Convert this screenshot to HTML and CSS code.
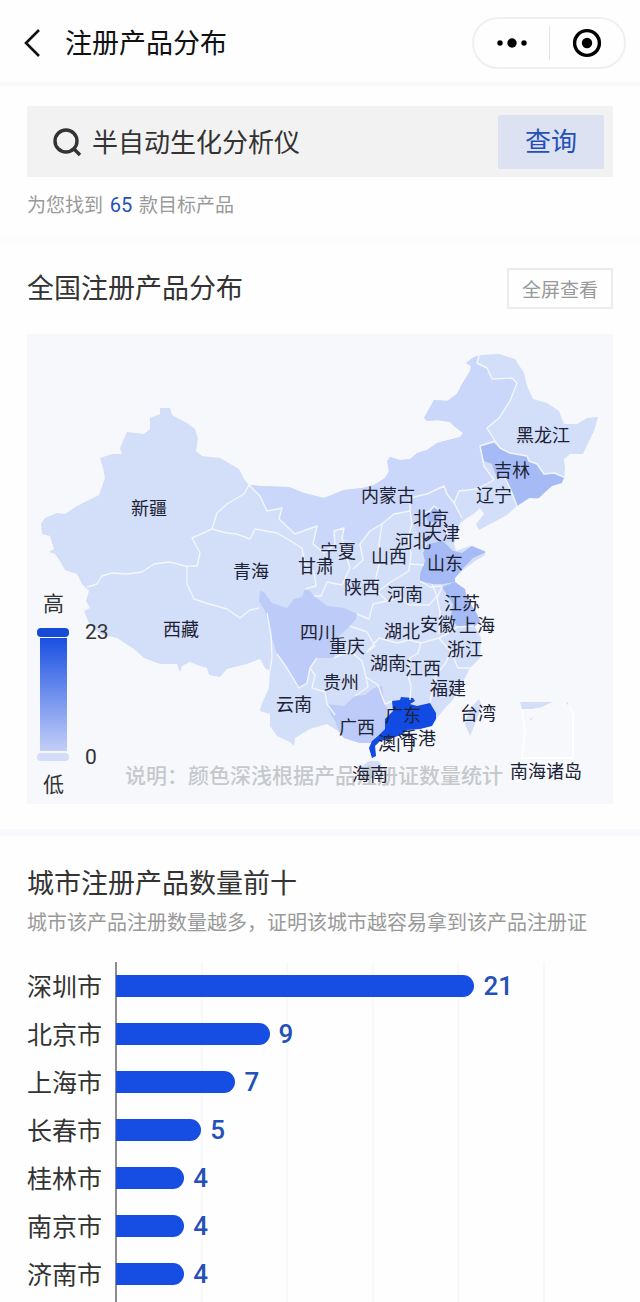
FILE: index.html
```
<!DOCTYPE html>
<html lang="zh-CN">
<head>
    <meta charset="UTF-8">
    <meta name="viewport" content="width=device-width, initial-scale=1.0">
    <title>注册产品分布</title>
    <link rel="stylesheet" href="styles.css">
</head>
<body>
    <header class="navbar">
        <button class="back-btn" type="button" aria-label="返回">
            <svg width="18" height="28" viewBox="0 0 18 28"><path d="M16 1 3 14l13 13" fill="none" stroke="#111" stroke-width="2.6"/></svg>
        </button>
        <h1>注册产品分布</h1>
        <div class="capsule">
            <button type="button" aria-label="更多">
                <svg width="32" height="12" viewBox="0 0 32 12"><circle cx="4" cy="6" r="2.7"/><circle cx="16" cy="6" r="4.7"/><circle cx="28" cy="6" r="2.7"/></svg>
            </button>
            <button type="button" aria-label="关闭">
                <svg width="30" height="30" viewBox="0 0 30 30"><circle cx="15" cy="15" r="12.4" fill="none" stroke="#000" stroke-width="3.4"/><circle cx="15" cy="15" r="5.2"/></svg>
            </button>
        </div>
    </header>

    <main>
        <!-- Search -->
        <section class="search-section">
            <form class="search-box">
                <label for="keyword" aria-label="搜索产品">
                    <svg width="30" height="30" viewBox="0 0 30 30"><g fill="none" stroke="#333" stroke-width="3.4"><circle cx="14" cy="14" r="11"/><path d="m21 21 7 7"/></g></svg>
                </label>
                <input id="keyword" type="text" value="半自动生化分析仪">
                <button class="query-btn" type="button">查询</button>
            </form>
            <p class="found">为您找到 <b>65</b> 款目标产品</p>
        </section>

        <!-- Map -->
        <section class="map-section">
            <div class="section-head">
                <h2>全国注册产品分布</h2>
                <button class="full-btn" type="button">全屏查看</button>
            </div>
            <svg class="map" viewBox="27 333 586 470" role="img" aria-label="全国注册产品分布地图">
                <defs>
                    <linearGradient id="scale" x1="0" y1="0" x2="0" y2="1">
                        <stop offset="0" stop-color="#1a50e2"/>
                        <stop offset="1" stop-color="#c3cff8"/>
                    </linearGradient>
                </defs>

                <!-- whole country -->
                <path class="land" d="M160 407H170L172 414 179 418 187 422 195 428 198 438 196 450 202 455 220 457 227 461 239 468 244 478 249 484 260 485 289 486 304 492 324 497 334 493 344 489 362 487 374 484 385 477 389 470 387 460 390 456 400 459 410 458 417 452 427 449 437 442 460 436 463 432 454 425 450 421 437 419 427 420 424 417 434 399 447 400 457 393 462 383 470 370 471 365 466 362 474 356 482 354 499 353 515 358 524 372 527 385 533 398 547 402 559 410 564 423H577L587 417 598 416 594 430 590 438 583 453H570L564 458 565 467 564 479 552 485 537 498 530 497 517 505 507 514 494 521 479 529 476 523 484 513 480 507 475 512 467 517 459 523 459 527 454 543 456 550 470 545 485 550 485 554 475 560 463 569 455 577 455 581 465 590 467 597 477 613 480 620 474 625 479 633 481 637 480 657 470 667 465 677 460 687 452 700 445 707 437 717 430 725 420 728 407 729 403 733 390 738 380 740 375 745 376 755 372 757 369 747 372 742 360 742 344 737 338 730 327 723 310 728 295 737 294 745 290 741 277 735 270 725V713L260 710 262 702 269 687 270 670 265 667 260 658 247 663 227 668 220 676 209 674 207 667 200 665 190 661 182 665 180 671 177 663 160 663 144 657 134 648 117 637 100 633 89 622 84 610 90 607 86 600 89 590 82 583 77 573 65 569 60 560 55 553 49 551 54 548 50 535 42 533 41 523 45 517 57 512 65 513 77 505 99 494 105 477 103 467 100 457 112 453H122L120 447 127 431 144 433 150 428V417L160 413z"/>
                <path class="land" d="M479 698L481 703 479 713 470 735 465 723 470 707zM361 766l8-6h9l4 4-4 8-8 5-8-3z"/>

                <!-- 内蒙古 -->
                <path class="mid" d="M249 484L260 485 289 486 304 492 324 497 334 493 344 489 362 487 374 484 385 477 389 470 387 460 390 456 400 459 410 458 417 452 427 449 437 442 460 436 463 432 454 425 450 421 437 419 427 420 424 417 434 399 447 400 457 393 462 383 470 370 471 365 466 362 474 356 479 355 477 362 487 367 492 378 512 377 517 382 510 400 499 417 487 427 495 440 480 445 484 465 494 479 477 488 459 490 454 502 447 493 444 485 427 493 410 497V510L394 513 382 523 370 530 360 543 342 537 344 527 334 530 335 543 324 552 313 543 317 525 295 533 279 518 282 507 267 510 260 495z"/>
                <path class="mid" d="M410 497L427 493 444 485 447 493 454 502 462 517 457 530 454 542 443 540 428 543 420 535 412 523z"/>

                <!-- 四川 / 广西 -->
                <path class="warm" d="M260 590l4 1 8 11 15 5 7-9 8-2 3-8 5 2 4 5 13 10 17 2 13 6-1 5-6 7-13 12-5 5 5 6-3 9-17 0-7 10-3 15-8 5-12-20-10-14-5-16-7-27-6-10zM327 703l17 2 11-10 10-1 9-7 8-2 2 15 3 8-1 18-3 11-11 5-12 0-16-5-5-7-4-10-5-8z"/>

                <!-- 吉林 / 山东 / 江苏 / 北京 -->
                <path class="hot" d="M480 445L494 442 500 447 510 452 527 455 529 460 537 463 544 473 554 472 564 475 562 482 552 485 545 491 539 497 529 497 517 505 510 487 505 477 497 477 492 463 484 460zM428 543L443 540 453 550 462 552 472 545 486 551 473 557 463 567 455 577V581L443 583H433L420 580V573L425 560 423 552zM442 586L455 581 465 588 467 597 477 613 480 620 474 626 457 625 451 615 453 603 447 594zM425 512l5-2 4-5 5 4 4 3-1 6-6 4-8-2z"/>

                <!-- 广东 -->
                <path class="top" d="M392 700L400 699 401 696 413 697 415 700 410 703 417 705 430 702 433 707 436 712V718L432 725 420 728 407 729 403 733 390 738 380 740 375 745 376 755 372 757 369 747 372 740 378 735 385 728V718L393 710z"/>

                <!-- province borders -->
                <g class="border">
                    <path d="M87 586L97 583 102 575 112 572 127 573 142 571 154 563 170 561 185 565 197 565 200 552 192 537 212 528 217 512 227 503 244 493 249 484 260 495 267 510 282 507 279 518 295 533 317 525 313 543 324 552"/>
                    <path d="M212 528L227 532 237 533 250 538 255 528 277 532 289 539 302 547 305 563 314 571 316 585 305 588M187 565V583L194 598 209 603 227 608 240 617 250 609 259 607M267 612l4 22 1 22-2 14M277 653l10 14 12 20 8-5 3-15 7-10"/>
                    <path d="M324 552L335 543 334 530 344 527 342 537 345 551M360 543L370 530 382 523 394 513 410 510V497L427 493 444 485 447 493 454 502 459 490 477 488 494 479M454 502l8 15"/>
                    <path d="M479 355L477 362 487 367 492 378 512 377 517 382 510 400 499 417 487 427 495 440 480 445 484 465 494 479M495 440l5 7 10 5 17 3 2 5 8 3 7 10 10-1 10 4M505 477l5 10 7 18"/>
                    <path d="M345 551l5 16-8 17-15-3-6 14-7 0M360 543l3 16-10 9M382 523l-3 20 1 17-4 16 1 14 10 10M410 510l2 13-4 14 3 16-2 17-20 12-10 8M409 563l15 1M420 580l10 6 12-1M387 600l14-4 8 8 20 0 8-9-5-12M357 613l12 5 4-15 14-3M350 625l17 6 8 14-8 6M367 651l12-14 18 5 12-3 12 3-3 10-8 5-2 17 3 11-1 14M334 657l16-7 12 10 4 16 2 10-13 9M366 676l12 8 7 19 7-3M421 642l18-5 10-5 8-6M442 586l-5 11 3 14-1 22M439 637l12 14-6 12-9 11-6 27M451 651l7 16 12 0M457 626l17-1M327 703l-2-12-13-4 3-13-5-7M335 714l-8-11M425 512l5-2 4-5 9 7-1 6M444 520l3 12-3 8"/>
                </g>

                <!-- South China Sea inset -->
                <path class="land" d="M520 701h32l-10 5-10 2h-10zM566 702l2-1v3zM530 718l3-2-2 4z"/>
                <path class="inset" d="M522 708l3 24-3 25h51v-45l-4-7"/>

                <text class="note" x="125" y="782">说明：颜色深浅根据产品注册证数量统计</text>

                <g class="names">
                    <text x="149" y="514">新疆</text>
                    <text x="181" y="635">西藏</text>
                    <text x="251" y="577">青海</text>
                    <text x="316" y="572">甘肃</text>
                    <text x="338" y="557">宁夏</text>
                    <text x="388" y="501">内蒙古</text>
                    <text x="543" y="441">黑龙江</text>
                    <text x="512" y="476">吉林</text>
                    <text x="494" y="501">辽宁</text>
                    <text x="431" y="524">北京</text>
                    <text x="442" y="539">天津</text>
                    <text x="413" y="547">河北</text>
                    <text x="389" y="562">山西</text>
                    <text x="445" y="569">山东</text>
                    <text x="362" y="593">陕西</text>
                    <text x="405" y="600">河南</text>
                    <text x="462" y="609">江苏</text>
                    <text x="438" y="630">安徽</text>
                    <text x="477" y="631">上海</text>
                    <text x="402" y="637">湖北</text>
                    <text x="318" y="638">四川</text>
                    <text x="347" y="652">重庆</text>
                    <text x="465" y="655">浙江</text>
                    <text x="388" y="669">湖南</text>
                    <text x="423" y="674">江西</text>
                    <text x="341" y="688">贵州</text>
                    <text x="448" y="694">福建</text>
                    <text x="294" y="710">云南</text>
                    <text x="403" y="721">广东</text>
                    <text x="357" y="733">广西</text>
                    <text x="478" y="719">台湾</text>
                    <text x="418" y="744">香港</text>
                    <text x="396" y="749">澳门</text>
                    <text x="370" y="780">海南</text>
                    <text x="546" y="777">南海诸岛</text>
                </g>

                <!-- legend -->
                <g class="legend">
                    <text x="43" y="610">高</text>
                    <rect x="37" y="627" width="32" height="9" rx="4" fill="#164bd6"/>
                    <rect x="40" y="637" width="27" height="113" fill="url(#scale)"/>
                    <rect x="37" y="752" width="32" height="8" rx="4" fill="#d3ddf7"/>
                    <text x="43" y="791">低</text>
                    <text x="85" y="638">23</text>
                    <text x="85" y="763">0</text>
                </g>
            </svg>
        </section>

        <!-- Top cities -->
        <section class="city-section">
            <h2>城市注册产品数量前十</h2>
            <p class="desc">城市该产品注册数量越多，证明该城市越容易拿到该产品注册证</p>
            <ul class="chart" id="cityChart"></ul>
        </section>
    </main>

    <script src="script.js"></script>
</body>
</html>
```
FILE: styles.css
```
/* General */
* {
    box-sizing: border-box;
}

body {
    margin: 0;
    font-family: Roboto, "Noto Sans CJK SC", sans-serif;
    color: #333;
    background: #fefefe;
}

h1, h2, p, ul {
    margin: 0;
    padding: 0;
    font-weight: 400;
}

button, input {
    border: 0;
    padding: 0;
    background: none;
    color: inherit;
    font-family: inherit;
}

button {
    cursor: pointer;
}

svg {
    display: block;
}

h2 {
    font-size: 27px;
    line-height: 40px;
}

/* Top bar */
.navbar {
    display: flex;
    align-items: center;
    height: 86px;
    padding: 4px 14px 0 23px;
    border-bottom: 4px solid #f8f8f8;
}

.navbar h1 {
    flex: 1;
    margin-left: 24px;
    padding-top: 2px;
    font-size: 27px;
    line-height: 40px;
    color: #111;
}

.capsule {
    display: flex;
    width: 154px;
    height: 52px;
    border: 2px solid #f0f0f0;
    border-radius: 26px;
}

.capsule button {
    flex: 1;
    display: flex;
    align-items: center;
    justify-content: center;
}

.capsule button + button {
    position: relative;
}

/* short divider between the two buttons */
.capsule button + button::before {
    content: "";
    position: absolute;
    top: 7px;
    bottom: 7px;
    left: 0;
    border-left: 1px solid #e4e4e4;
}

/* Search */
.search-section {
    padding: 20px 27px 16px;
    border-bottom: 6px solid #fcfcfc;
}

.search-box {
    display: flex;
    align-items: center;
    height: 71px;
    padding: 0 9px 0 25px;
    background: #f2f2f2;
}

.search-box input {
    flex: 1;
    min-width: 0;
    height: 40px;
    margin-left: 10px;
    padding-bottom: 2px;
    font-size: 26px;
    outline: none;
}

.query-btn {
    width: 106px;
    height: 54px;
    padding-bottom: 4px;
    font-size: 26px;
    color: #2450b8;
    background: #dde2f2;
    border-radius: 2px;
}

.found {
    margin-top: 13px;
    font-size: 19px;
    line-height: 30px;
    color: #999;
}

.found b {
    margin: 0 2px;
    font-size: 20px;
    font-weight: 400;
    color: #2450b8;
}

/* Map */
.map-section {
    padding: 25px 27px;
    border-bottom: 7px solid #f9f9fd;
}

.section-head {
    display: flex;
    align-items: center;
    justify-content: space-between;
    margin-bottom: 25px;
}

.full-btn {
    width: 106px;
    height: 41px;
    border: 2px solid #ececec;
    font-size: 19px;
    color: #999;
}

.map {
    width: 100%;
    height: auto;
    background: #f6f8fc;
}

.land {
    fill: #d3def9;
}

.mid {
    fill: #cbd7fa;
}

.warm {
    fill: #bccbf7;
}

.hot {
    fill: #a6bbf6;
}

.top {
    fill: #124be3;
}

.border {
    fill: none;
    stroke: #f2f6fe;
    stroke-width: 1.4;
    stroke-linejoin: round;
}

.inset {
    fill: none;
    stroke: #fdfefe;
    stroke-width: 2;
}

.names {
    font-size: 18px;
    text-anchor: middle;
    fill: #1c2233;
}

.note {
    font-size: 21px;
    font-weight: 500;
    fill: #c6c8cc;
}

.legend {
    font-size: 21px;
    fill: #333;
}

/* Top cities */
.city-section {
    padding: 28px 12px 5px 27px;
}

.desc {
    margin-top: 4px;
    font-size: 20px;
    line-height: 30px;
    color: #999;
    white-space: nowrap;
}

.chart {
    position: relative;
    margin-top: 24px;
    list-style: none;
}

/* axis and grid lines behind the bars, one line per 5 products */
.chart::before {
    content: "";
    position: absolute;
    top: 0;
    bottom: -5px;
    left: 88px;
    width: calc((100% - 88px) * 5 / 6);
    border-left: 2px solid #8a8d94;
    background: linear-gradient(to left, #f7f8fa 2px, transparent 2px) 0 0 / 20% 100%;
}

.chart li {
    position: relative;
    display: flex;
    align-items: center;
    height: 48px;
}

.city {
    width: 89px;
    padding-bottom: 3px;
    font-size: 25px;
}

.track {
    flex: 1;
    display: flex;
    align-items: center;
}

.bar {
    height: 22px;
    border-radius: 0 11px 11px 0;
    background: #164de3;
}

.value {
    margin-left: 9px;
    font-size: 26px;
    font-weight: 500;
    line-height: 30px;
    color: #2450b8;
}
```
FILE: script.js
```
// Registered products per city
const cities = [
    ["深圳市", 21],
    ["北京市", 9],
    ["上海市", 7],
    ["长春市", 5],
    ["桂林市", 4],
    ["南京市", 4],
    ["济南市", 4]
];

const axisMax = 30;
const chart = document.getElementById("cityChart");

cities.forEach(([name, count]) => {
    const row = document.createElement("li");
    row.innerHTML = `
        <span class="city">${name}</span>
        <div class="track">
            <div class="bar" style="width: ${count / axisMax * 100}%"></div>
            <span class="value">${count}</span>
        </div>`;
    chart.appendChild(row);
});
```
